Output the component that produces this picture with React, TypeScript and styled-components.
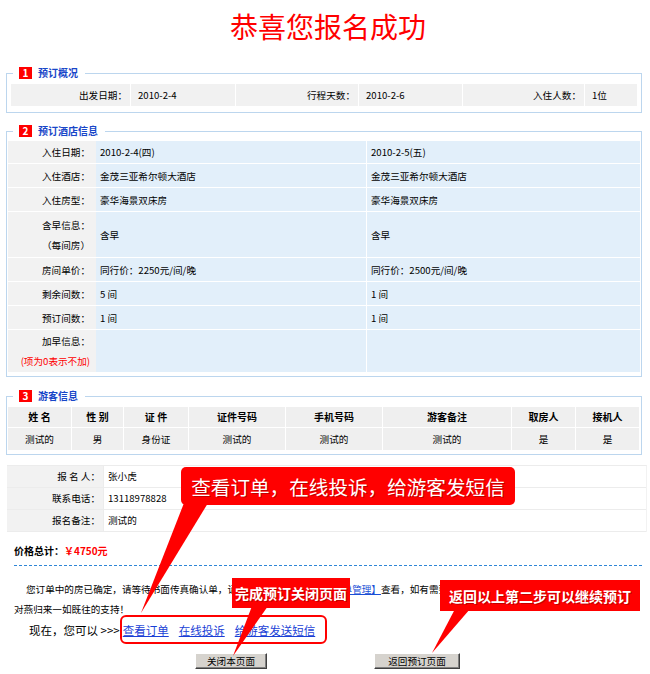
import styled, { createGlobalStyle } from 'styled-components';

const GlobalStyle = createGlobalStyle`
  html, body {
    margin: 0;
    padding: 0;
    background: #fff;
  }
  body {
    font-family: "Noto Sans CJK SC", "Liberation Sans", sans-serif;
    color: #000;
  }
`;

const Page = styled.div`
  position: relative;
  width: 650px;
  height: 674px;
  overflow: hidden;
  background: #fff;
  font-size: 9.6px;
`;

const Title = styled.h1`
  margin: 0;
  padding-left: 6px;
  height: 52px;
  line-height: 52px;
  text-align: center;
  font-size: 28px;
  font-weight: normal;
  color: #f00;
`;

const Fieldset = styled.fieldset<{ $mt: number; $pad: string }>`
  margin: ${({ $mt }) => $mt}px 8px 0 6px;
  padding: ${({ $pad }) => $pad};
  border: 1px solid #bcd6ee;
  min-width: 0;
`;

const Legend = styled.legend`
  margin-left: 6px;
  padding: 0 7px 0 6px;
  height: 14px;
  line-height: 14px;
  white-space: nowrap;
`;

const Badge = styled.span`
  display: inline-block;
  vertical-align: top;
  width: 13px;
  height: 12px;
  margin-top: 1px;
  background: #f00;
  color: #fff;
  font-size: 10px;
  font-weight: bold;
  line-height: 12px;
  text-align: center;
`;

const LegendText = styled.span`
  display: inline-block;
  vertical-align: top;
  margin-left: 6px;
  font-size: 10px;
  font-weight: bold;
  color: #1846c8;
`;

/* 1 预订概况 */
const SummaryRow = styled.div`
  display: grid;
  grid-template-columns: 119px 104px 122px 103px 121px 1fr;
  column-gap: 1px;
  margin: 0 4px;
`;

const SummaryCell = styled.div<{ $label?: boolean }>`
  height: 22px;
  line-height: 22px;
  background: #f1f1f1;
  text-align: ${({ $label }) => ($label ? 'right' : 'left')};
  padding: ${({ $label }) => ($label ? '0 3px 0 0' : '0 0 0 7px')};
  white-space: nowrap;
`;

/* 2 预订酒店信息 */
const HotelTable = styled.div`
  margin: 0 1px;
`;

const HotelRow = styled.div<{ $h: number }>`
  display: grid;
  grid-template-columns: 88px 270px 1fr;
  height: ${({ $h }) => $h}px;
  box-sizing: border-box;
  border-bottom: 1px solid #fff;

  &:last-child {
    border-bottom: 0;
  }
`;

const HotelLabel = styled.div`
  display: flex;
  flex-direction: column;
  justify-content: center;
  align-items: flex-end;
  padding-right: 6px;
  background: #f2f2f2;
  line-height: 20px;
  white-space: nowrap;
`;

const HotelValue = styled.div<{ $second?: boolean }>`
  display: flex;
  align-items: center;
  padding-left: 4px;
  background: #e2effa;
  border-left: ${({ $second }) => ($second ? '1px solid #fff' : '0')};
  white-space: nowrap;
`;

const Hint = styled.span`
  color: #f00;
`;

/* 3 游客信息 */
const GuestGrid = styled.div`
  display: grid;
  grid-template-columns: 63px 51px 64px 96px 96px 128px 63px 1fr;
  gap: 1px;
  margin: 0 2px 0 1px;
`;

const GuestCell = styled.div<{ $head?: boolean }>`
  height: ${({ $head }) => ($head ? 20 : 22)}px;
  line-height: ${({ $head }) => ($head ? 20 : 22)}px;
  background: #efefef;
  text-align: center;
  font-size: ${({ $head }) => ($head ? '10px' : '9.6px')};
  font-weight: ${({ $head }) => ($head ? 'bold' : 'normal')};
  white-space: nowrap;
`;

/* 报名人 */
const ContactTable = styled.div`
  margin: 10px 3px 0 7px;
  border-top: 1px solid #ececec;
  border-right: 1px solid #f2f2f2;
`;

const ContactRow = styled.div`
  display: grid;
  grid-template-columns: 96px 1fr;
  height: 22px;
  box-sizing: border-box;
  border-bottom: 1px solid #ececec;
  line-height: 21px;
`;

const ContactLabel = styled.div`
  background: #f2f2f2;
  text-align: right;
  padding-right: 3px;
  white-space: pre;
`;

const ContactValue = styled.div`
  padding-left: 4px;
  border-left: 1px solid #ececec;
`;

const Price = styled.div`
  margin: 11px 0 0 14px;
  height: 16px;
  line-height: 16px;
  font-size: 10px;
  font-weight: bold;
`;

const PriceValue = styled.span`
  color: #f00;
`;

const Divider = styled.div`
  margin: 6px 8px 0 14px;
  border-top: 1px dashed #2f86d6;
`;

const Notice = styled.p`
  margin: 13px 8px 0 14px;
  line-height: 20px;
  text-indent: 12px;
  white-space: nowrap;
`;

const InlineLink = styled.a`
  color: #1a4fd6;
  text-decoration: underline;
`;

const NowLine = styled.div`
  display: flex;
  align-items: center;
  margin-top: 1px;
  padding-left: 29px;
  height: 20px;
  font-size: 11.5px;
  white-space: nowrap;
`;

const NowLink = styled.a<{ $first?: boolean }>`
  margin-left: ${({ $first }) => ($first ? '3px' : '10px')};
  color: #1a3fd6;
  text-decoration: underline;
`;

const ButtonRow = styled.div`
  display: flex;
  gap: 107px;
  margin-top: 13px;
  padding-left: 195px;
`;

const Button = styled.button<{ $w: number }>`
  width: ${({ $w }) => $w}px;
  height: 16px;
  padding: 0;
  font-family: inherit;
  font-size: 9.6px;
  line-height: 13px;
  color: #000;
  background: #d6d3ce;
  border: 1px solid;
  border-color: #fff #404040 #404040 #fff;
  box-shadow: inset -1px -1px 0 #808080;
`;

/* overlays */
const Tails = styled.svg`
  position: absolute;
  left: 0;
  top: 0;
  pointer-events: none;
  z-index: 2;
`;

const Callout = styled.div<{ $x: number; $y: number; $w: number; $h: number; $big?: boolean }>`
  position: absolute;
  z-index: 3;
  left: ${({ $x }) => $x}px;
  top: ${({ $y }) => $y}px;
  width: ${({ $w }) => $w}px;
  height: ${({ $h }) => $h}px;
  display: flex;
  align-items: center;
  justify-content: center;
  background: #f00;
  border-radius: ${({ $big }) => ($big ? '5px' : '0')};
  color: #fff;
  font-size: ${({ $big }) => ($big ? '19.6px' : '14px')};
  font-weight: ${({ $big }) => ($big ? 'normal' : 'bold')};
  text-shadow: 1px 1px 0 rgba(120, 0, 0, 0.45);
  white-space: nowrap;
`;

const Highlight = styled.div`
  position: absolute;
  z-index: 2;
  left: 120px;
  top: 615px;
  width: 207px;
  height: 29px;
  box-sizing: border-box;
  border: 2px solid #f00;
  border-radius: 6px;
  pointer-events: none;
`;

const hotelRows: { label: React.ReactNode; a: string; b: string; h: number }[] = [
  { label: '入住日期：', a: '2010-2-4(四)', b: '2010-2-5(五)', h: 23 },
  { label: '入住酒店：', a: '金茂三亚希尔顿大酒店', b: '金茂三亚希尔顿大酒店', h: 24 },
  { label: '入住房型：', a: '豪华海景双床房', b: '豪华海景双床房', h: 24 },
  {
    label: (
      <>
        <span>含早信息：</span>
        <span>（每间房）</span>
      </>
    ),
    a: '含早',
    b: '含早',
    h: 46,
  },
  { label: '房间单价：', a: '同行价：2250元/间/晚', b: '同行价：2500元/间/晚', h: 24 },
  { label: '剩余间数：', a: '5 间', b: '1 间', h: 24 },
  { label: '预订间数：', a: '1 间', b: '1 间', h: 24 },
  {
    label: (
      <>
        <span>加早信息：</span>
        <Hint>(项为0表示不加)</Hint>
      </>
    ),
    a: '',
    b: '',
    h: 42,
  },
];

const guestHead = ['姓 名', '性 别', '证 件', '证件号码', '手机号码', '游客备注', '取房人', '接机人'];
const guestRow = ['测试的', '男', '身份证', '测试的', '测试的', '测试的', '是', '是'];

export default function App() {
  return (
    <Page>
      <GlobalStyle />
      <Title>恭喜您报名成功</Title>

      <Fieldset $mt={14} $pad="4px 0 6px">
        <Legend>
          <Badge>1</Badge>
          <LegendText>预订概况</LegendText>
        </Legend>
        <SummaryRow>
          <SummaryCell $label>出发日期：</SummaryCell>
          <SummaryCell>2010-2-4</SummaryCell>
          <SummaryCell $label>行程天数：</SummaryCell>
          <SummaryCell>2010-2-6</SummaryCell>
          <SummaryCell $label>入住人数：</SummaryCell>
          <SummaryCell>1位</SummaryCell>
        </SummaryRow>
      </Fieldset>

      <Fieldset $mt={11} $pad="3px 0 4px">
        <Legend>
          <Badge>2</Badge>
          <LegendText>预订酒店信息</LegendText>
        </Legend>
        <HotelTable>
          {hotelRows.map((r, i) => (
            <HotelRow key={i} $h={r.h}>
              <HotelLabel>{r.label}</HotelLabel>
              <HotelValue>{r.a}</HotelValue>
              <HotelValue $second>{r.b}</HotelValue>
            </HotelRow>
          ))}
        </HotelTable>
      </Fieldset>

      <Fieldset $mt={12} $pad="4px 0 4px">
        <Legend>
          <Badge>3</Badge>
          <LegendText>游客信息</LegendText>
        </Legend>
        <GuestGrid>
          {guestHead.map((h) => (
            <GuestCell key={h} $head>
              {h}
            </GuestCell>
          ))}
          {guestRow.map((v, i) => (
            <GuestCell key={i}>{v}</GuestCell>
          ))}
        </GuestGrid>
      </Fieldset>

      <ContactTable>
        <ContactRow>
          <ContactLabel>报 名 人：</ContactLabel>
          <ContactValue>张小虎</ContactValue>
        </ContactRow>
        <ContactRow>
          <ContactLabel>联系电话：</ContactLabel>
          <ContactValue>13118978828</ContactValue>
        </ContactRow>
        <ContactRow>
          <ContactLabel>报名备注：</ContactLabel>
          <ContactValue>测试的</ContactValue>
        </ContactRow>
      </ContactTable>

      <Price>
        价格总计：<PriceValue>￥4750元</PriceValue>
      </Price>
      <Divider />

      <Notice>
        您订单中的房已确定，请等待书面传真确认单，请登录本网站
        <InlineLink href="#">【会员中心订单管理】</InlineLink>
        查看，如有需要请与我们的客服人员联系，感谢您长期以来
        <br />
        对燕归来一如既往的支持！
      </Notice>

      <NowLine>
        现在，您可以 &gt;&gt;&gt;
        <NowLink href="#" $first>
          查看订单
        </NowLink>
        <NowLink href="#">在线投诉</NowLink>
        <NowLink href="#">给游客发送短信</NowLink>
      </NowLine>

      <ButtonRow>
        <Button $w={72}>关闭本页面</Button>
        <Button $w={86}>返回预订页面</Button>
      </ButtonRow>

      <Highlight />
      <Tails width={650} height={674} viewBox="0 0 650 674">
        <polygon points="184,503 208,503 141,613" fill="#f00" />
        <polygon points="252,606 268,606 233,656" fill="#f00" />
        <polygon points="455,609 470,609 432,653" fill="#f00" />
      </Tails>
      <Callout $x={181} $y={467} $w={334} $h={38} $big>
        查看订单，在线投诉，给游客发短信
      </Callout>
      <Callout $x={232} $y={578} $w={118} $h={30}>
        完成预订关闭页面
      </Callout>
      <Callout $x={440} $y={580} $w={200} $h={31}>
        返回以上第二步可以继续预订
      </Callout>
    </Page>
  );
}
